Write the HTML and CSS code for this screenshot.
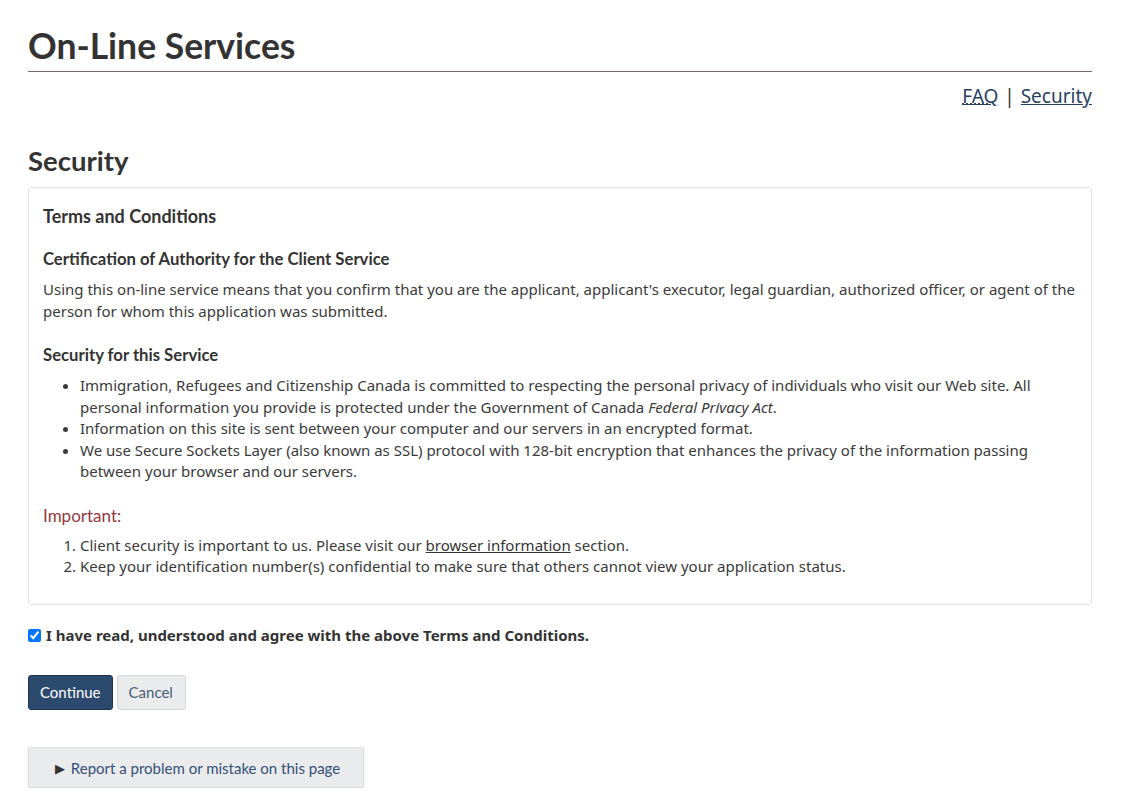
FILE: index.html
```html
<!DOCTYPE html>
<html lang="en">
<head>
<meta charset="utf-8">
<title>On-Line Services - Security</title>
<link rel="stylesheet" href="styles.css">
</head>
<body>
<main class="page">
  <h1 class="title">On-Line Services</h1>
  <nav class="toplinks">
    <a href="#" class="faq"><abbr title="Frequently Asked Questions">FAQ</abbr></a>
    <span class="sep">|</span>
    <a href="#">Security</a>
  </nav>
  <h2 class="section-title">Security</h2>
  <section class="panel">
    <h3 class="panel-h">Terms and Conditions</h3>
    <h4 class="sub-h">Certification of Authority for the Client Service</h4>
    <p class="text">Using this on-line service means that you confirm that you are the applicant, applicant's executor, legal guardian, authorized officer, or agent of the person for whom this application was submitted.</p>
    <h4 class="sub-h">Security for this Service</h4>
    <ul class="bullets">
      <li>Immigration, Refugees and Citizenship Canada is committed to respecting the personal privacy of individuals who visit our Web site. All personal information you provide is protected under the Government of Canada <em>Federal Privacy Act</em>.</li>
      <li>Information on this site is sent between your computer and our servers in an encrypted format.</li>
      <li>We use Secure Sockets Layer (also known as SSL) protocol with 128-bit encryption that enhances the privacy of the information passing between your browser and our servers.</li>
    </ul>
    <h4 class="important">Important:</h4>
    <ol class="numbers">
      <li>Client security is important to us. Please visit our <a href="#">browser information</a> section.</li>
      <li>Keep your identification number(s) confidential to make sure that others cannot view your application status.</li>
    </ol>
  </section>
  <label class="agree"><input type="checkbox" checked> I have read, understood and agree with the above Terms and Conditions.</label>
  <div class="actions">
    <button class="btn btn-primary" type="button">Continue</button>
    <button class="btn btn-default" type="button">Cancel</button>
  </div>
  <button class="report" type="button"><span class="tri">&#9654;</span> Report a problem or mistake on this page</button>
</main>
</body>
</html>
```
FILE: styles.css
```css
html, body {
  margin: 0;
  padding: 0;
  background: #fff;
}
body {
  font-family: "Noto Sans", "DejaVu Sans", sans-serif;
  color: #3a3a3a;
  font-size: 15px;
  line-height: 21.5px;
}
.page {
  width: 1064px;
  margin-left: 28px;
  padding-top: 24px;
}
.title {
  font-family: Lato, "Liberation Sans", sans-serif;
  font-weight: 700;
  font-size: 35.5px;
  line-height: 44px;
  color: #333;
  margin: 0;
  padding-bottom: 3px;
  border-bottom: 1px solid #7a676b;
}
.toplinks {
  text-align: right;
  font-size: 19px;
  line-height: 24px;
  margin-top: 12px;
  color: #333;
}
.toplinks a {
  color: #284162;
  text-decoration: underline;
}
.toplinks abbr {
  text-decoration: underline dotted;
}
.toplinks .sep {
  margin: 0 1px;
}
.section-title {
  font-family: Lato, "Liberation Sans", sans-serif;
  font-weight: 700;
  font-size: 27.5px;
  line-height: 34px;
  margin: 36px 0 9px;
  color: #333;
}
.panel {
  border: 1px solid #e1e1e1;
  border-radius: 3px;
  padding: 14px 14px 16px;
}
.panel-h {
  font-family: Lato, "Liberation Sans", sans-serif;
  font-weight: 700;
  font-size: 18px;
  line-height: 24px;
  margin: 2px 0 19px;
  color: #333;
}
.sub-h {
  font-family: Lato, "Liberation Sans", sans-serif;
  font-weight: 700;
  font-size: 16.7px;
  line-height: 24px;
  margin: 0 0 8px;
  color: #333;
}
.text {
  margin: 0 0 21px;
}
.bullets {
  margin: 0 0 21px;
  padding-left: 37px;
}
.important {
  font-family: Lato, "Liberation Sans", sans-serif;
  font-weight: 400;
  font-size: 17px;
  line-height: 24px;
  color: #913a3e;
  margin: 0 0 7px;
}
.numbers {
  margin: 0 0 10px;
  padding-left: 37px;
}
.numbers a {
  color: #333;
}
.agree {
  display: flex;
  align-items: center;
  gap: 5px;
  margin-top: 20px;
  font-weight: 700;
  font-size: 15px;
  color: #333;
}
.agree input {
  margin: 0;
  width: 13px;
  height: 13px;
}
.actions {
  display: flex;
  gap: 4px;
  margin-top: 29px;
}
.btn {
  font-family: Lato, "Liberation Sans", sans-serif;
  font-size: 15px;
  line-height: 20px;
  padding: 6px 11px 7px;
  border-radius: 3px;
  cursor: pointer;
}
.btn-primary {
  background: #2c4a6d;
  color: #fff;
  border: 1px solid #1d3350;
}
.btn-default {
  background: #eaebed;
  color: #4a5d75;
  border: 1px solid #d4d6da;
  padding-left: 11px;
  padding-right: 12px;
}
.report {
  display: block;
  margin-top: 37px;
  width: 336px;
  height: 41px;
  background: #eaebed;
  border: 1px solid #dcdee1;
  border-radius: 2px;
  box-shadow: 0 1px 2px rgba(0,0,0,0.2);
  font-family: Lato, "Liberation Sans", sans-serif;
  font-size: 15px;
  color: #335075;
  text-align: left;
  padding: 0 0 0 26px;
}
.report .tri {
  font-size: 13px;
  color: #333;
  margin-right: 2px;
  position: relative;
  top: -1px;
}
```
